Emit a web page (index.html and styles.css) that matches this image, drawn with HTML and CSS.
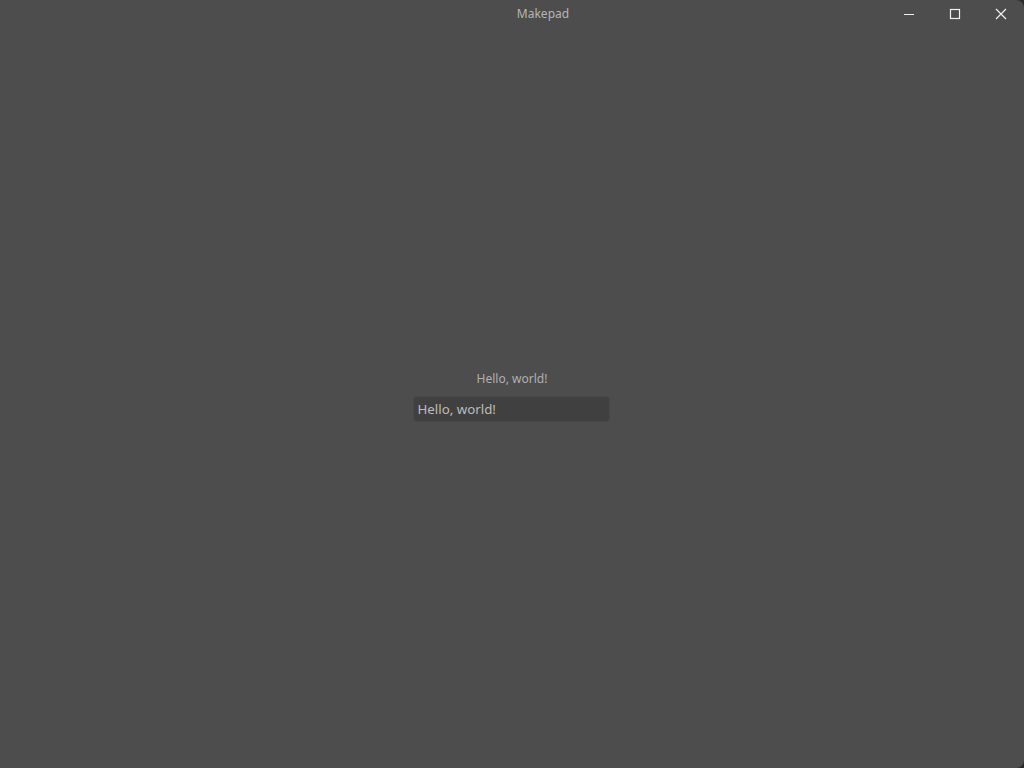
FILE: index.html
```html
<!DOCTYPE html>
<html>
<head>
<meta charset="utf-8">
<link rel="stylesheet" href="styles.css">
</head>
<body>
<div class="window">
  <div class="titlebar">
    <div class="title">Makepad</div>
    <div class="controls">
      <div class="btn">
        <svg width="12" height="12" viewBox="0 0 12 12"><path d="M1 6.5H11" stroke="#f0f0f0" stroke-width="1"/></svg>
      </div>
      <div class="btn">
        <svg width="12" height="12" viewBox="0 0 12 12"><rect x="1.5" y="1.5" width="9" height="9" fill="none" stroke="#f0f0f0" stroke-width="1.2"/></svg>
      </div>
      <div class="btn">
        <svg width="12" height="12" viewBox="0 0 12 12"><path d="M1 1L11 11M11 1L1 11" stroke="#f0f0f0" stroke-width="1.2"/></svg>
      </div>
    </div>
  </div>
  <div class="main">
    <div class="label">Hello, world!</div>
    <div class="input">Hello, world!</div>
  </div>
</div>
</body>
</html>
```
FILE: styles.css
```css
html, body {
  margin: 0;
  padding: 0;
  background: #2b2b2b;
  width: 1024px;
  height: 768px;
  overflow: hidden;
}
.window {
  width: 1024px;
  height: 768px;
  background: #4d4d4d;
  border-radius: 0 8px 8px 0;
  display: flex;
  flex-direction: column;
  font-family: "Noto Sans", "Open Sans", sans-serif;
}
.titlebar {
  height: 28px;
  display: flex;
  flex: none;
}
.title {
  flex: 1;
  padding-left: 200px;
  text-align: center;
  font-size: 12px;
  line-height: 27px;
  color: #b5b5b5;
}
.controls {
  display: flex;
}
.btn {
  width: 46px;
  height: 28px;
  display: flex;
  align-items: center;
  justify-content: center;
}
.main {
  flex: 1;
  display: flex;
  flex-direction: column;
  align-items: center;
  padding-top: 342px;
}
.label {
  font-size: 12px;
  line-height: 18px;
  color: #b0b0b0;
  margin-bottom: 8px;
}
.input {
  width: 187px;
  height: 24px;
  margin-left: -2px;
  background: #404040;
  border: 1px solid #484848;
  border-radius: 4px;
  padding: 0 4px;
  font-size: 13.3px;
  line-height: 24px;
  color: #bdbdbd;
}
```
